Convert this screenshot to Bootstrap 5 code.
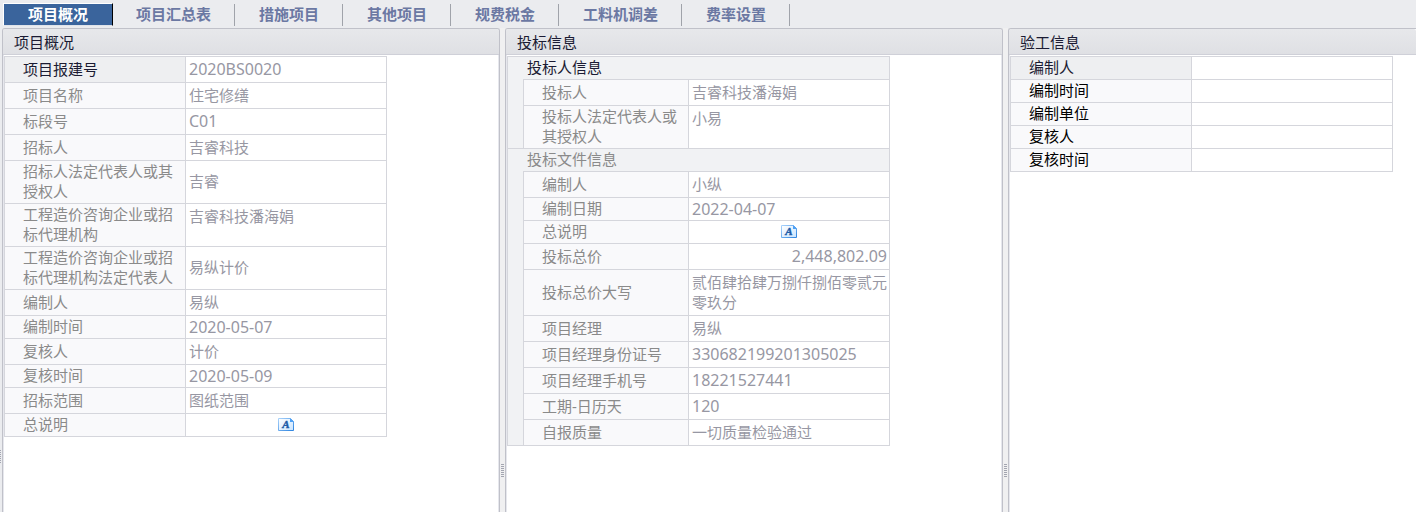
<!DOCTYPE html>
<html lang="zh-CN">
<head>
<meta charset="utf-8">
<meta name="viewport" content="width=device-width, initial-scale=1">
<title>项目概况</title>
<link href="https://cdn.jsdelivr.net/npm/bootstrap@5.3.0/dist/css/bootstrap.min.css" rel="stylesheet">
<style>
  body { font: 15px/20px "Noto Sans", "Noto Sans CJK SC", sans-serif; background: #ebecef; color: #1b1b33; }
  a, button { font: inherit; }

  /* tab strip */
  .tab-strip { height: 28px; padding: 3px 0 2px 3px; }
  .tab-strip .nav-link { padding: 0 23px 2px 24px; height: 22px; margin-top: 1px; color: #6b78a3; font-weight: 700; border-right: 1px solid #a0a3aa; border-radius: 0; }
  .tab-strip .nav-link.active { height: 23px; margin: 0 -1px 0 0; padding: 0 24px 1px; color: #fff; background: #3a649c; border: 1px solid #fff; border-right-color: #000; border-bottom-color: #dfe3ea; }

  /* three panes with splitters between them */
  .panes { display: grid; grid-template-columns: 2px minmax(388px, 498fr) 5px minmax(388px, 498fr) 5px minmax(388px, 408fr); }
  .pane { border: 1px solid #c0c1c9; border-bottom: 0; border-radius: 3px 3px 0 0; background: #fff; box-shadow: inset 1px 0 #e6e7ed, inset -1px 0 #e6e7ed; }
  .pane-last { border-right: 0; border-top-right-radius: 0; box-shadow: inset 1px 0 #e6e7ed; }
  .pane-title { height: 26px; margin: 0; padding: 3px 11px 2px; font-size: 15px; line-height: 20px; font-weight: 400; color: #1b1b33; background: linear-gradient(#e7e8eb, #dfe0e4); border-bottom: 1px solid #cfd0d8; border-radius: 2px 2px 0 0; }
  .pane-body { padding: 1px 0 0 1px; }
  .splitter { background: #f0f0f1; padding-top: 436px; }
  .rail { background: #ebecef; padding-top: 422px; }
  .grip { width: 3px; height: 13px; margin: 0 auto; background: repeating-linear-gradient(#a3a5b0 0 1px, transparent 1px 2px); }
  .rail .grip { width: 1px; margin: 0; }

  /* property tables */
  .props { width: 383px; table-layout: fixed; border-collapse: separate; border-spacing: 0; border-top: 1px solid #d5d6dc; border-right: 1px solid #d5d6dc; }
  .props th, .props td { height: 26px; padding: 0 0 2px; border: 0 solid #d5d6dc; border-width: 0 0 1px 1px; vertical-align: middle; font-weight: 400; }
  .props th { padding-left: 18px; background: #f9f9fb; color: #8a8a8a; }
  .props td { padding: 0 2px 2px 3px; color: #9797a3; background: #fff; }
  .props .short > th, .props .short > td { height: 23px; }
  .props .short > td.num { padding-bottom: 0; }
  .props .tall > th, .props .tall > td { height: 43px; }
  .props .taller > th, .props .taller > td { height: 46px; }
  .props .on { background: #eeeff1; color: #1b1b33; }
  .props .group-name { border-left: 0; padding-left: 4px; background: #f1f2f4; }
  .props .indent { background: #f1f2f4; }
  .props .num { font-size: 16px; }
  .props .top-line { vertical-align: top; padding-top: 2px; }
  .props.ready th { color: #000; }
  .props.ready .on { color: #1b1b33; }
  .c-label { width: 181px; } .c-indent { width: 16px; } .c-sub { width: 165px; } .c-value { width: 201px; }
  .props .memo-cell { padding: 0 3px 2px; }
  .memo { display: block; width: 16px; height: 13px; margin: 0 auto; padding: 0; border: 0; background: none; }
  .memo svg { display: block; }
</style>
</head>
<body class="vh-100 d-flex flex-column overflow-hidden">
<svg width="0" height="0" class="position-absolute" aria-hidden="true">
  <defs>
    <linearGradient id="sheet" x1="0" y1="0" x2="1" y2="1"><stop offset="0" stop-color="#fff"/><stop offset="1" stop-color="#c9e4ff"/></linearGradient>
    <linearGradient id="edge" x1="0" y1="0" x2="1" y2="1"><stop offset="0" stop-color="#a9d2fb"/><stop offset="1" stop-color="#2d84e0"/></linearGradient>
    <symbol id="memo-icon" viewBox="0 0 16 13">
      <path d="M.5.5h12l3 3v9H.5z" fill="url(#sheet)" stroke="url(#edge)"/>
      <path d="M12 0l4 4h-4z" fill="#4ea1f5"/>
      <text x="8" y="10" text-anchor="middle" font-family="Liberation Serif, serif" font-size="11" font-weight="700" font-style="italic" fill="#1c5aa6" stroke="#1c5aa6" stroke-width=".4">A</text>
    </symbol>
  </defs>
</svg>

<nav class="tab-strip nav flex-nowrap flex-shrink-0 text-nowrap">
  <a class="nav-link active" aria-current="page" href="#">项目概况</a>
  <a class="nav-link" href="#">项目汇总表</a>
  <a class="nav-link" href="#">措施项目</a>
  <a class="nav-link" href="#">其他项目</a>
  <a class="nav-link" href="#">规费税金</a>
  <a class="nav-link" href="#">工料机调差</a>
  <a class="nav-link" href="#">费率设置</a>
</nav>

<main class="panes flex-grow-1">
  <div class="rail"><div class="grip"></div></div>

  <section class="pane">
    <h2 class="pane-title">项目概况</h2>
    <div class="pane-body">
      <table class="props">
        <colgroup><col class="c-label"><col class="c-value"></colgroup>
        <tbody>
          <tr><th scope="row" class="on">项目报建号</th><td class="num">2020BS0020</td></tr>
          <tr><th scope="row">项目名称</th><td>住宅修缮</td></tr>
          <tr><th scope="row">标段号</th><td class="num">C01</td></tr>
          <tr><th scope="row">招标人</th><td>吉睿科技</td></tr>
          <tr class="tall"><th scope="row">招标人法定代表人或其授权人</th><td>吉睿</td></tr>
          <tr class="tall"><th scope="row">工程造价咨询企业或招标代理机构</th><td class="top-line">吉睿科技潘海娟</td></tr>
          <tr class="tall"><th scope="row">工程造价咨询企业或招标代理机构法定代表人</th><td>易纵计价</td></tr>
          <tr><th scope="row">编制人</th><td>易纵</td></tr>
          <tr class="short"><th scope="row">编制时间</th><td class="num">2020-05-07</td></tr>
          <tr><th scope="row">复核人</th><td>计价</td></tr>
          <tr class="short"><th scope="row">复核时间</th><td class="num">2020-05-09</td></tr>
          <tr><th scope="row">招标范围</th><td>图纸范围</td></tr>
          <tr class="short"><th scope="row">总说明</th><td class="memo-cell"><button type="button" class="memo" aria-label="总说明"><svg width="16" height="13"><use href="#memo-icon"/></svg></button></td></tr>
        </tbody>
      </table>
    </div>
  </section>

  <div class="splitter"><div class="grip"></div></div>

  <section class="pane">
    <h2 class="pane-title">投标信息</h2>
    <div class="pane-body">
      <table class="props">
        <colgroup><col class="c-indent"><col class="c-sub"><col class="c-value"></colgroup>
        <tbody>
          <tr class="short"><td class="indent" rowspan="3"></td><th scope="rowgroup" colspan="2" class="group-name on">投标人信息</th></tr>
          <tr><th scope="row">投标人</th><td>吉睿科技潘海娟</td></tr>
          <tr class="tall"><th scope="row">投标人法定代表人或其授权人</th><td class="top-line">小易</td></tr>
        </tbody>
        <tbody>
          <tr class="short"><td class="indent" rowspan="11"></td><th scope="rowgroup" colspan="2" class="group-name">投标文件信息</th></tr>
          <tr><th scope="row">编制人</th><td>小纵</td></tr>
          <tr class="short"><th scope="row">编制日期</th><td class="num">2022-04-07</td></tr>
          <tr class="short"><th scope="row">总说明</th><td class="memo-cell"><button type="button" class="memo" aria-label="总说明"><svg width="16" height="13"><use href="#memo-icon"/></svg></button></td></tr>
          <tr><th scope="row">投标总价</th><td class="num text-end">2,448,802.09</td></tr>
          <tr class="taller"><th scope="row">投标总价大写</th><td>贰佰肆拾肆万捌仟捌佰零贰元零玖分</td></tr>
          <tr><th scope="row">项目经理</th><td>易纵</td></tr>
          <tr><th scope="row">项目经理身份证号</th><td class="num">330682199201305025</td></tr>
          <tr><th scope="row">项目经理手机号</th><td class="num">18221527441</td></tr>
          <tr><th scope="row">工期-日历天</th><td class="num">120</td></tr>
          <tr><th scope="row">自报质量</th><td>一切质量检验通过</td></tr>
        </tbody>
      </table>
    </div>
  </section>

  <div class="splitter"><div class="grip"></div></div>

  <section class="pane pane-last">
    <h2 class="pane-title">验工信息</h2>
    <div class="pane-body">
      <table class="props ready">
        <colgroup><col class="c-label"><col class="c-value"></colgroup>
        <tbody>
          <tr class="short"><th scope="row" class="on">编制人</th><td></td></tr>
          <tr class="short"><th scope="row">编制时间</th><td></td></tr>
          <tr class="short"><th scope="row">编制单位</th><td></td></tr>
          <tr class="short"><th scope="row">复核人</th><td></td></tr>
          <tr class="short"><th scope="row">复核时间</th><td></td></tr>
        </tbody>
      </table>
    </div>
  </section>
</main>
<script src="https://cdn.jsdelivr.net/npm/bootstrap@5.3.0/dist/js/bootstrap.bundle.min.js"></script>
</body>
</html>
